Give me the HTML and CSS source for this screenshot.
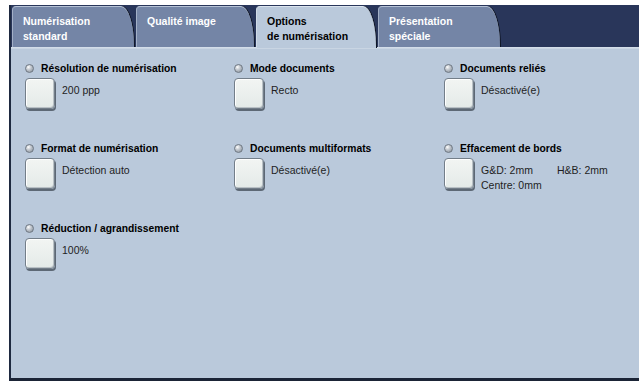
FILE: index.html
```html
<!DOCTYPE html>
<html lang="fr">
<head>
  <meta charset="UTF-8">
  <title>Options de numérisation</title>
  <link rel="stylesheet" href="styles.css">
</head>
<body>
  <div class="panel">
    <div class="tabs">
      <div class="tab">Numérisation<br>standard</div>
      <div class="tab">Qualité image</div>
      <div class="tab active">Options<br>de numérisation</div>
      <div class="tab">Présentation<br>spéciale</div>
    </div>

    <div class="content">
      <div class="item">
        <div class="label"><span class="dot"></span>Résolution de numérisation</div>
        <div class="body">
          <button class="btn"></button>
          <div class="value">200 ppp</div>
        </div>
      </div>
      <div class="item">
        <div class="label"><span class="dot"></span>Mode documents</div>
        <div class="body">
          <button class="btn"></button>
          <div class="value">Recto</div>
        </div>
      </div>
      <div class="item">
        <div class="label"><span class="dot"></span>Documents reliés</div>
        <div class="body">
          <button class="btn"></button>
          <div class="value">Désactivé(e)</div>
        </div>
      </div>

      <div class="item">
        <div class="label"><span class="dot"></span>Format de numérisation</div>
        <div class="body">
          <button class="btn"></button>
          <div class="value">Détection auto</div>
        </div>
      </div>
      <div class="item">
        <div class="label"><span class="dot"></span>Documents multiformats</div>
        <div class="body">
          <button class="btn"></button>
          <div class="value">Désactivé(e)</div>
        </div>
      </div>
      <div class="item">
        <div class="label"><span class="dot"></span>Effacement de bords</div>
        <div class="body">
          <button class="btn"></button>
          <div class="value edges">
            <span>G&amp;D: 2mm</span>
            <span>H&amp;B: 2mm</span>
            <span>Centre: 0mm</span>
          </div>
        </div>
      </div>

      <div class="item">
        <div class="label"><span class="dot"></span>Réduction / agrandissement</div>
        <div class="body">
          <button class="btn"></button>
          <div class="value">100%</div>
        </div>
      </div>
    </div>
  </div>
</body>
</html>
```

FILE: styles.css
```css
body {
  margin: 0;
  background: #ffffff;
  font-family: "Liberation Sans", Arial, sans-serif;
}

.panel {
  margin: 5px 0 0 9px;
  height: 373px;
  display: flex;
  flex-direction: column;
  background: #bac9db;
  border-left: 2px solid #1e2940;
  border-bottom: 3px solid #1b2436;
}

/* barre des onglets */
.tabs {
  display: flex;
  gap: 2px;
  height: 41px;
  padding: 1px 0 0 1px;
  background: #29365a;
  border-bottom: 1px solid #d3dde9;
}

.tab {
  width: 122px;
  height: 41px;
  box-sizing: border-box;
  padding: 7px 10px 0 10px;
  background: #7485a6;
  color: #ffffff;
  font-size: 10.5px;
  font-weight: bold;
  line-height: 15px;
  border-top: 1px solid #b6c2d6;
  border-left: 1px solid #a3b0c7;
  border-top-left-radius: 4px;
  border-top-right-radius: 13px 40px;
  box-shadow: 1px 0 0 #0f1626;
}

.tab:nth-child(2) {
  width: 118px;
}

.tab:nth-child(3) {
  width: 120px;
}

.tab.active {
  height: 42px;
  margin-bottom: -1px;
  background: #bac9db;
  color: #000000;
  border-top-color: #dbe4ee;
  border-left-color: #d1dbe7;
}

/* zone des options */
.content {
  flex: 1;
  display: grid;
  grid-template-columns: 209px 210px 1fr;
  grid-auto-rows: 80px;
  align-content: start;
  padding: 14px 0 0 14px;
  border-top: 1px solid #c9d5e3;
}

.label {
  display: flex;
  align-items: center;
  gap: 7px;
  height: 10px;
  font-size: 10.3px;
  font-weight: bold;
  color: #000000;
}

.dot {
  width: 7px;
  height: 7px;
  border-radius: 50%;
  border: 1px solid #6f7883;
  background: radial-gradient(circle at 35% 30%, #ffffff 0, #c9ced4 35%, #7f8893 100%);
}

.body {
  display: flex;
  margin-top: 5px;
}

.btn {
  width: 30px;
  height: 31px;
  padding: 0;
  margin-right: 7px;
  border: 1px solid #737e89;
  border-radius: 4px;
  background: linear-gradient(#f2f5f3, #e4eae8);
  box-shadow: inset 1px 1px 0 #ffffff, inset -1px -1px 0 #b9c1c6, 1px 2px 0 #5d6875;
}

.value {
  padding-top: 5px;
  font-size: 10.5px;
  line-height: 15px;
  color: #1e1e1e;
}

.edges {
  display: grid;
  grid-template-columns: 76px auto;
}
```
